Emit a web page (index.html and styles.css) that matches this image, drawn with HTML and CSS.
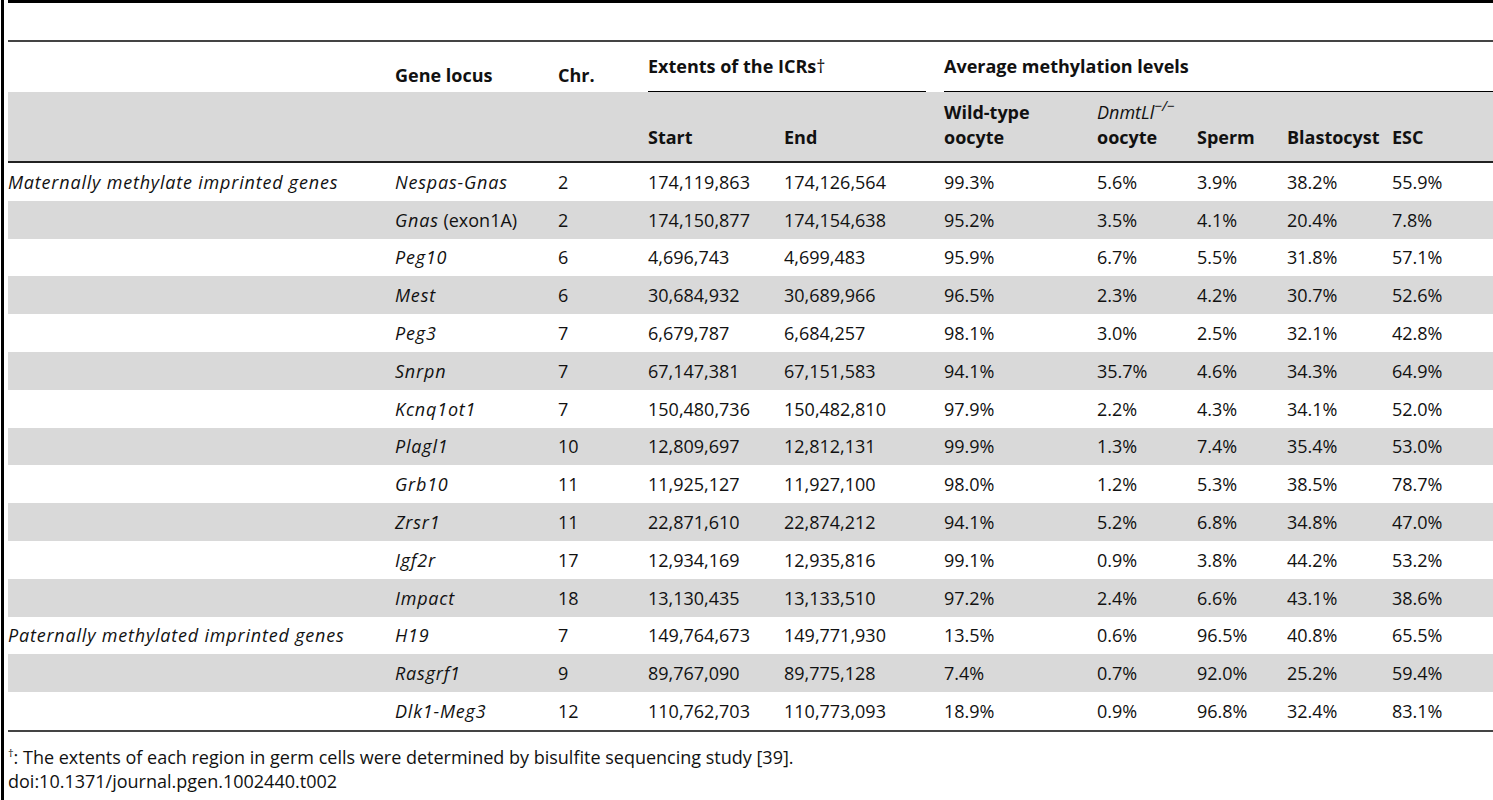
FILE: index.html
```html
<!doctype html>
<html lang="en">

<head>
  <meta charset="UTF-8" />
  <meta name="viewport" content="width=device-width, initial-scale=1.0" />
  <title>Table 2</title>

  <link rel="stylesheet" href="styles.css">
</head>

<body>
  <div class="frame">
    <div class="top-rule"></div>

    <table class="icr-table">
      <colgroup>
        <col class="c-group">
        <col class="c-gene">
        <col class="c-chr">
        <col class="c-start">
        <col class="c-end">
        <col class="c-wt">
        <col class="c-ko">
        <col class="c-sperm">
        <col class="c-blast">
        <col class="c-esc">
      </colgroup>
      <thead>
        <tr class="head-top">
          <th></th>
          <th class="low">Gene locus</th>
          <th class="low">Chr.</th>
          <th colspan="2"><div class="span-head">Extents of the ICRs<span class="dagger">†</span></div></th>
          <th colspan="5"><div class="span-head last">Average methylation levels</div></th>
        </tr>
        <tr class="head-sub">
          <th></th>
          <th></th>
          <th></th>
          <th>Start</th>
          <th>End</th>
          <th>Wild-type<br>oocyte</th>
          <th><i class="thin">DnmtLl<sup>−/−</sup></i><br>oocyte</th>
          <th>Sperm</th>
          <th>Blastocyst</th>
          <th>ESC</th>
        </tr>
      </thead>
      <tbody>
        <tr>
          <td><i>Maternally methylate imprinted genes</i></td>
          <td><i>Nespas-Gnas</i></td>
          <td>2</td><td>174,119,863</td><td>174,126,564</td>
          <td>99.3%</td><td>5.6%</td><td>3.9%</td><td>38.2%</td><td>55.9%</td>
        </tr>
        <tr>
          <td></td>
          <td><i>Gnas</i> (exon1A)</td>
          <td>2</td><td>174,150,877</td><td>174,154,638</td>
          <td>95.2%</td><td>3.5%</td><td>4.1%</td><td>20.4%</td><td>7.8%</td>
        </tr>
        <tr>
          <td></td>
          <td><i>Peg10</i></td>
          <td>6</td><td>4,696,743</td><td>4,699,483</td>
          <td>95.9%</td><td>6.7%</td><td>5.5%</td><td>31.8%</td><td>57.1%</td>
        </tr>
        <tr>
          <td></td>
          <td><i>Mest</i></td>
          <td>6</td><td>30,684,932</td><td>30,689,966</td>
          <td>96.5%</td><td>2.3%</td><td>4.2%</td><td>30.7%</td><td>52.6%</td>
        </tr>
        <tr>
          <td></td>
          <td><i>Peg3</i></td>
          <td>7</td><td>6,679,787</td><td>6,684,257</td>
          <td>98.1%</td><td>3.0%</td><td>2.5%</td><td>32.1%</td><td>42.8%</td>
        </tr>
        <tr>
          <td></td>
          <td><i>Snrpn</i></td>
          <td>7</td><td>67,147,381</td><td>67,151,583</td>
          <td>94.1%</td><td>35.7%</td><td>4.6%</td><td>34.3%</td><td>64.9%</td>
        </tr>
        <tr>
          <td></td>
          <td><i>Kcnq1ot1</i></td>
          <td>7</td><td>150,480,736</td><td>150,482,810</td>
          <td>97.9%</td><td>2.2%</td><td>4.3%</td><td>34.1%</td><td>52.0%</td>
        </tr>
        <tr>
          <td></td>
          <td><i>Plagl1</i></td>
          <td>10</td><td>12,809,697</td><td>12,812,131</td>
          <td>99.9%</td><td>1.3%</td><td>7.4%</td><td>35.4%</td><td>53.0%</td>
        </tr>
        <tr>
          <td></td>
          <td><i>Grb10</i></td>
          <td>11</td><td>11,925,127</td><td>11,927,100</td>
          <td>98.0%</td><td>1.2%</td><td>5.3%</td><td>38.5%</td><td>78.7%</td>
        </tr>
        <tr>
          <td></td>
          <td><i>Zrsr1</i></td>
          <td>11</td><td>22,871,610</td><td>22,874,212</td>
          <td>94.1%</td><td>5.2%</td><td>6.8%</td><td>34.8%</td><td>47.0%</td>
        </tr>
        <tr>
          <td></td>
          <td><i>Igf2r</i></td>
          <td>17</td><td>12,934,169</td><td>12,935,816</td>
          <td>99.1%</td><td>0.9%</td><td>3.8%</td><td>44.2%</td><td>53.2%</td>
        </tr>
        <tr>
          <td></td>
          <td><i>Impact</i></td>
          <td>18</td><td>13,130,435</td><td>13,133,510</td>
          <td>97.2%</td><td>2.4%</td><td>6.6%</td><td>43.1%</td><td>38.6%</td>
        </tr>
        <tr>
          <td><i>Paternally methylated imprinted genes</i></td>
          <td><i>H19</i></td>
          <td>7</td><td>149,764,673</td><td>149,771,930</td>
          <td>13.5%</td><td>0.6%</td><td>96.5%</td><td>40.8%</td><td>65.5%</td>
        </tr>
        <tr>
          <td></td>
          <td><i>Rasgrf1</i></td>
          <td>9</td><td>89,767,090</td><td>89,775,128</td>
          <td>7.4%</td><td>0.7%</td><td>92.0%</td><td>25.2%</td><td>59.4%</td>
        </tr>
        <tr>
          <td></td>
          <td><i>Dlk1-Meg3</i></td>
          <td>12</td><td>110,762,703</td><td>110,773,093</td>
          <td>18.9%</td><td>0.9%</td><td>96.8%</td><td>32.4%</td><td>83.1%</td>
        </tr>
      </tbody>
    </table>

    <div class="notes">
      <p><sup>†</sup>: The extents of each region in germ cells were determined by bisulfite sequencing study [39].</p>
      <p>doi:10.1371/journal.pgen.1002440.t002</p>
    </div>
  </div>
</body>

</html>
```

FILE: styles.css
```css
html,
body {
  margin: 0;
  height: 800px;
  overflow: hidden;
  background: #fff;
}

body {
  font-family: "Open Sans", "Noto Sans", sans-serif;
  font-size: 18px;
  color: #111;
}

.frame {
  margin-left: 1px;
  border-left: 3px solid #000;
  padding-left: 4px;
  height: 800px;
  box-sizing: border-box;
}

.top-rule {
  height: 37px;
  border-top: 3px solid #000;
  border-bottom: 2px solid #444;
}

.icr-table {
  width: 100%;
  border-collapse: separate;
  border-spacing: 0;
  table-layout: fixed;
}

.c-group { width: 387px; }
.c-gene  { width: 163px; }
.c-chr   { width: 90px; }
.c-start { width: 136px; }
.c-end   { width: 160px; }
.c-wt    { width: 153px; }
.c-ko    { width: 100px; }
.c-sperm { width: 90px; }
.c-blast { width: 105px; }
.c-esc   { width: auto; }

th,
td {
  padding: 0;
  text-align: left;
  white-space: nowrap;
}

td i {
  letter-spacing: 0.8px;
}

th {
  font-weight: 700;
  line-height: 25px;
}

.head-top {
  height: 50px;
}

.head-top th {
  vertical-align: bottom;
}

.head-top th.low {
  padding-bottom: 4px;
}

.span-head {
  padding-bottom: 12px;
  border-bottom: 1px solid #000;
  margin-right: 18px;
}

.span-head.last {
  margin-right: 0;
}

.dagger {
  font-weight: 400;
}

.head-sub {
  height: 71px;
}

.head-sub th {
  vertical-align: bottom;
  padding-bottom: 11px;
  background: #d9d9d9;
  border-bottom: 2px solid #222;
}

.thin {
  font-weight: 400;
}

.thin sup {
  font-size: 14px;
  vertical-align: 8px;
  line-height: 0;
}

tbody tr {
  height: 37.8px;
}

tbody tr:nth-child(even) {
  background: #d9d9d9;
}

tbody tr:last-child {
  height: 40px;
}

tbody tr:last-child td {
  border-bottom: 2px solid #444;
}

.notes {
  padding-top: 13px;
}

.notes p {
  margin: 0;
  line-height: 24px;
}

.notes sup {
  font-size: 11px;
  vertical-align: 7px;
  line-height: 0;
}
```
